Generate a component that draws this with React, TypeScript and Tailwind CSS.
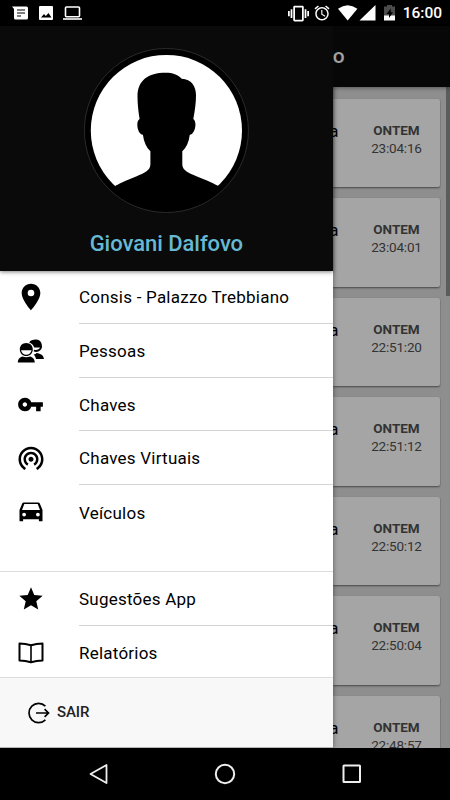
import type { ReactNode } from "react"
import { MdAlarm, MdLocationOn, MdStar, MdVibration, MdVpnKey, MdWifiTethering } from "react-icons/md"

interface MenuItem {
    label: string;
    icon: ReactNode;
}

const PeopleIcon = () => (
    <svg width="28" height="26" viewBox="17 338 28 26" fill="currentColor">
        <path fillRule="evenodd" d="M35.700 339.600a6.200 6.200 0 0 1 2.700 11.800c-1.800.8-3.600.5-4.800-.2l.5-1.500c3 1 5.200-.6 5.900-2.200h-5.800c-.8-2.900-2.800-4.400-5-5.100 1.200-1.800 3.500-2.800 6.500-2.800z" />
        <path d="M33.700 354.500c1.500-.4 2.400-.9 2.800-1.600 4.300.8 6.900 2 7.500 6.100h-8c-.3-1.600-1-3-2.300-4.500z" />
        <path fillRule="evenodd" d="M26.300 343c-3.900 0-6.500 2.800-6.500 6.400s2.900 6.600 6.500 6.600 6.500-3 6.500-6.600-2.600-6.400-6.500-6.400zm-5.300 7.200h10.600c-.6 2.700-2.600 4.500-5.300 4.500s-4.700-1.800-5.300-4.500z" />
        <path d="M17.800 362.500c.3-3.800 2.200-5.200 4.700-5.900 2.400 1 5.200 1 7.600 0 2.500.7 4.400 2.100 4.700 5.900z" />
    </svg>
)

const CarIcon = () => (
    <svg width="24" height="20" viewBox="0 0 24 20" fill="currentColor">
        <path fillRule="evenodd" d="M4.800.5h14.400c.8 0 1.300.4 1.600 1.100L23.500 8v11.200h-3.600v-1.900H4.100v1.900H.5V8l2.700-6.400C3.500.9 4 .5 4.800.5zm.5 1.600L3 8h18l-2.300-5.900zM5.100 10.700a1.900 1.900 0 1 0 0 3.800 1.900 1.900 0 0 0 0-3.800zm13.800 0a1.900 1.900 0 1 0 0 3.800 1.900 1.900 0 0 0 0-3.800z" />
    </svg>
)

const BookIcon = () => (
    <svg width="26" height="22" viewBox="0 0 26 22" fill="none" stroke="currentColor" strokeWidth="2" strokeLinejoin="round">
        <path d="M13 3.200Q7.500 1.500 1.500 1.500v17Q7.500 18.500 13 20.200q5.500-1.700 11.500-1.700v-17Q18.500 1.500 13 3.200z" />
        <path d="M13 3v17" strokeWidth="1.600" />
    </svg>
)

const ExitIcon = () => (
    <svg width="22" height="22" viewBox="0 0 22 22" fill="none" stroke="currentColor" strokeWidth="1.700">
        <path d="M17.400 4.200a9.600 9.600 0 1 0 0 13.600" />
        <path d="M8 11h12.300M16.600 7.200l3.900 3.800-3.900 3.800" />
    </svg>
)

const Avatar = () => (
    <svg width="165" height="165" viewBox="84 47.500 165 165">
        <circle cx="166.400" cy="130" r="82" fill="#000" stroke="#3b3b3b" strokeWidth=".7" />
        <circle cx="166.400" cy="130" r="75.600" fill="#fff" />
        <path d="M165.700 72.300C148 72.300 137.500 80 137.500 96c0 8 1 16 2.100 22.500-4.400 2.500-2 15.500 3.300 15.800 1 7.500 3.600 13 7.500 16.500V164c0 6-6.500 8.800-13.700 11.700-7.200 2.900-15 5.800-21.500 9.800a75.600 75.600 0 0 0 102.900 0c-6.500-4-14.500-6.900-21.700-9.800-7.200-2.900-14.100-5.700-14.100-11.700v-13.200c4-3.500 6.500-9 7.500-16.500 5.300-.3 7.700-13.300 3.500-15.800 1.500-8 2.700-16 2.700-23.500 0-9.500-4.500-16.500-14.300-16.800-4-4-9-5.900-16-5.900z" />
        <path d="M115.200 185.500q51 -14 102.900 0v15q-51 14-102.900 0z" clipPath="url(#avatar)" />
        <clipPath id="avatar">
            <circle cx="166.400" cy="130" r="81.400" />
        </clipPath>
    </svg>
)

const mainItems: MenuItem[] = [
    { label: "Consis - Palazzo Trebbiano", icon: <MdLocationOn size={32} /> },
    { label: "Pessoas", icon: <PeopleIcon /> },
    { label: "Chaves", icon: <MdVpnKey size={27} /> },
    { label: "Chaves Virtuais", icon: <MdWifiTethering size={30} /> },
    { label: "Veículos", icon: <CarIcon /> },
]

const extraItems: MenuItem[] = [
    { label: "Sugestões App", icon: <MdStar size={28} /> },
    { label: "Relatórios", icon: <BookIcon /> },
]

const times = ["23:04:16", "23:04:01", "22:51:20", "22:51:12", "22:50:12", "22:50:04", "22:48:57"]

const MenuList = ({ items }: { items: MenuItem[] }) => (
    <ul>
        {items.map((item, i) => (
            <li key={item.label} className="flex h-[53.700px] items-stretch">
                <div className="flex w-[61px] shrink-0 items-center justify-center pb-px">{item.icon}</div>
                <div className={`mb-[0.700px] ml-[18px] flex flex-1 items-center pt-[2px] text-[17px] tracking-[0.230px] whitespace-nowrap ${i < items.length - 1 ? "border-b border-[#d4d4d4]" : ""}`}>
                    {item.label}
                </div>
            </li>
        ))}
    </ul>
)

const StatusBar = () => (
    <div className="flex h-[26px] items-center justify-between bg-black pr-[8px] pl-3 text-white">
        <div className="flex items-center gap-[10px]">
            <svg width="17" height="14" viewBox="0 0 17 14">
                <path d="M0 .5h14.500Q16 .5 16 2v10q0 1.500-1.500 1.500h-11Q2 13.500 2 12V3z" fill="#fff" />
                <path d="M5 4h8M5 7h8M5 10h4" stroke="#000" strokeWidth="1.200" />
            </svg>
            <svg width="14" height="14" viewBox="0 0 14 14">
                <rect width="14" height="14" rx="1" fill="#fff" />
                <path d="M2 11.500l3-3.500 1.800 2L9.500 7l3 4.500z" />
            </svg>
            <svg width="19" height="14" viewBox="0 0 19 14" fill="none" stroke="#fff">
                <rect x="2.500" y="1" width="14" height="9.800" rx="1" strokeWidth="1.600" />
                <path d="M0 13h19" strokeWidth="1.600" />
            </svg>
        </div>
        <div className="flex items-center">
            <MdVibration size={21} />
            <MdAlarm size={18} className="ml-1" />
            <svg width="38" height="16" viewBox="0 0 38 16" fill="#fff" className="ml-[7px]">
                <path d="M0 3.800Q9.700-3.400 19.400 3.800L9.700 15.500z" />
                <path d="M37.500 0v15.500H21.500z" />
            </svg>
            <svg width="11" height="16" viewBox="0 0 11 16" className="ml-[8px]">
                <path d="M0 1.500h3V0h5v1.500h3V11H0z" fill="#4c4c4c" />
                <path d="M0 10.500h11v5H0z" fill="#fff" />
                <path d="M6.800 3.500L2.500 9h2.500v4l4-5.700H6.800z" />
            </svg>
            <span className="ml-[7.500px] pt-[2px] text-[15.500px] leading-none font-medium">16:00</span>
        </div>
    </div>
)

const App = () => {
    return (
        <div className="flex h-[800px] w-[450px] flex-col overflow-hidden bg-black font-['Roboto',sans-serif] text-black">
            <StatusBar />

            <div className="flex h-[722px]">
                {/* Drawer */}
                <aside className="z-10 flex w-[332.700px] shrink-0 flex-col bg-white shadow-[0_0_5px_rgba(0,0,0,0.450)]">
                    <header className="z-10 flex h-[245px] shrink-0 flex-col items-center bg-[#0a0a0a] pt-[21.500px] shadow-[0_1px_4px_rgba(0,0,0,0.500)]">
                        <Avatar />
                        <h1 className="mt-[15px] text-[22px] leading-[31px] font-medium tracking-[-0.040px] text-[#67b9d3]">Giovani Dalfovo</h1>
                    </header>
                    <nav className="flex-1">
                        <MenuList items={mainItems} />
                        <div className="mt-8 h-[105px] border-t border-[#dcdcdc] pt-[0.500px]">
                            <MenuList items={extraItems} />
                        </div>
                    </nav>
                    <footer className="flex h-[71px] shrink-0 items-center border-t border-b border-t-[#dedede] border-b-[#b5b5b5] bg-[#f8f8f8] pl-7">
                        <ExitIcon />
                        <span className="ml-[7px] text-[15px] font-medium tracking-[-0.100px] text-[#222]">SAIR</span>
                    </footer>
                </aside>

                {/* Page behind the drawer */}
                <main className="flex flex-1 flex-col overflow-hidden bg-[#8e8e8e]">
                    <div className="z-10 flex h-[61px] shrink-0 items-center bg-[#070707] text-[21px] font-medium text-[#a0a0a0] shadow-[0_1px_4px_rgba(0,0,0,0.400)]">
                        o
                    </div>
                    <div className="flex min-h-0 flex-1 justify-between">
                        <div className="flex w-[108px] flex-col gap-[11px] overflow-hidden pt-[11.500px] pr-px">
                            {times.map((time) => (
                                <div key={time} className="flex h-[88.500px] shrink-0 justify-between rounded-r-[2px] bg-[#a5a5a5] pt-[22px] pr-[18px] shadow-[0_1px_2px_rgba(0,0,0,0.500)]">
                                    <span className="-ml-[3.500px] text-[17px] leading-[21px]">a</span>
                                    <div className="text-center text-[#333]">
                                        <p className="text-[13.500px] leading-[19px] font-bold tracking-[-0.050px]">ONTEM</p>
                                        <p className="text-[13.500px] leading-[17px] tracking-[-0.200px]">{time}</p>
                                    </div>
                                </div>
                            ))}
                        </div>
                        <div className="h-[209px] w-1 bg-[#5c5c5c]" />
                    </div>
                </main>
            </div>

            {/* Android navigation */}
            <div className="flex h-[52px] items-center justify-between bg-black pr-[88px] pl-[89px]">
                <svg width="20" height="22" viewBox="0 0 20 22" fill="none" stroke="#eee" strokeWidth="1.800" strokeLinejoin="round">
                    <path d="M17.500 2v18L1.500 11z" />
                </svg>
                <svg width="22" height="22" viewBox="0 0 22 22" fill="none" stroke="#eee" strokeWidth="2" className="-ml-[2px]">
                    <circle cx="11" cy="11" r="9.200" />
                </svg>
                <svg width="20" height="20" viewBox="0 0 20 20" fill="none" stroke="#eee" strokeWidth="2">
                    <rect x="1.500" y="1.500" width="16.500" height="16.500" rx=".5" />
                </svg>
            </div>
        </div>
    )
}

export default App
